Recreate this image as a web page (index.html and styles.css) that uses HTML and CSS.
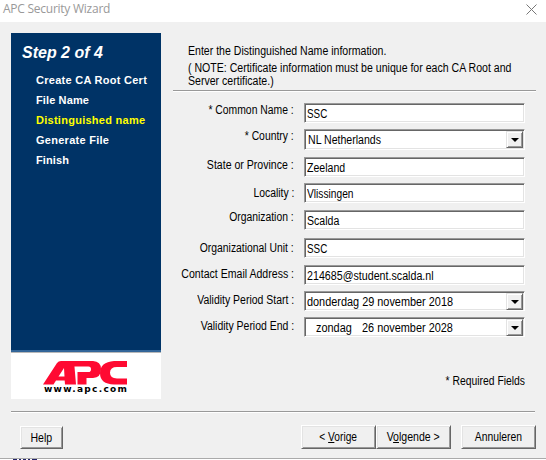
FILE: index.html
```html
<!DOCTYPE html>
<html lang="en">
<head>
<meta charset="utf-8">
<title>APC Security Wizard</title>
<link rel="stylesheet" href="styles.css">
</head>
<body>
<div class="window">
  <header class="titlebar">
    <span class="caption">APC Security Wizard</span>
    <svg class="close" width="11" height="11" viewBox="0 0 11 11"><path d="M.5.5l10 10M10.5.5l-10 10"/></svg>
  </header>
  <main class="content">
    <aside class="side">
      <div class="steps">
        <h1>Step 2 of 4</h1>
        <ol>
          <li>Create CA Root Cert</li>
          <li class="tight">File Name</li>
          <li class="current">Distinguished name</li>
          <li>Generate File</li>
          <li class="tight">Finish</li>
        </ol>
      </div>
      <div class="brand">
        <svg class="logo" width="84" height="24" viewBox="0 0 84 24">
          <path fill-rule="evenodd" d="M0 23.500L14 2Q15.500 0 18 0H31L33 23.500H22L21.700 19.500H13L10.500 23.500ZM15.500 15.500H21.500L21 7Z"/>
          <path fill-rule="evenodd" d="M31 0H50Q58 .5 58 8Q58 16.500 50 17H43.500V23.500H34.500V11H45.500Q48 11 48 8.200Q48 5.500 45.500 5.500H31Z"/>
          <path d="M84 0H71Q57 1 57 12Q57 23 71 23.500H84V17.500H74Q67 17.500 67 11.800Q67 6 74 6H84Z"/>
        </svg>
        <span class="url">www.apc.com</span>
      </div>
    </aside>
    <section class="panel">
      <p class="intro"><span class="t n88">Enter the Distinguished Name information.</span></p>
      <p class="note"><span class="t n88">( NOTE: Certificate information must be unique for each CA Root and</span><br><span class="t n88">Server certificate.)</span></p>
      <hr>
      <form class="form">
        <label class="up3"><span class="t n86">* Common Name :</span></label><div class="field"><span class="t n82">SSC</span></div>
        <label class="up3"><span class="t n86">* Country :</span></label><div class="field combo"><span class="t n88">NL Netherlands</span><i class="drop"></i></div>
        <label class="up2"><span class="t n88">State or Province :</span></label><div class="field"><span class="t n88">Zeeland</span></div>
        <label><span class="t n86">Locality :</span></label><div class="field"><span class="t n85">Vlissingen</span></div>
        <label class="up3"><span class="t n86">Organization :</span></label><div class="field"><span class="t n88">Scalda</span></div>
        <label><span class="t n86">Organizational Unit :</span></label><div class="field"><span class="t n82">SSC</span></div>
        <label class="up1"><span class="t n88">Contact Email Address :</span></label><div class="field"><span class="t n89">214685@student.scalda.nl</span></div>
        <label class="up1"><span class="t n87">Validity Period Start :</span></label><div class="field combo date"><span class="t n91">donderdag 29 november 2018</span><i class="drop"></i></div>
        <label class="up1"><span class="t n87">Validity Period End :</span></label><div class="field combo date"><span class="t n91 day">zondag</span><span class="t n91">26 november 2028</span><i class="drop"></i></div>
      </form>
      <p class="required"><span class="t n86">* Required Fields</span></p>
    </section>
  </main>
  <footer class="actions">
    <button class="help"><span class="t n88">Help</span></button>
    <button class="wide back"><span class="t n85">&lt; <u>V</u>orige</span></button>
    <button class="wide"><span class="t n88">V<u>o</u>lgende &gt;</span></button>
    <button class="wide cancel"><span class="t n86">Annuleren</span></button>
  </footer>
</div>
<svg class="behind" width="40" height="1" viewBox="0 0 40 1"><path d="M13 .5h4M19 .5h2M23 .5h3M28 .5h2M32 .5h5"/></svg>
</body>
</html>
```

FILE: styles.css
```css
* { box-sizing: border-box; }
body { margin: 0; width: 546px; height: 460px; overflow: hidden; background: #fff; font: 12px/14px "Liberation Sans", Arial, sans-serif; color: #000; }
p, h1, ol { margin: 0; padding: 0; }
span { white-space: pre; }
/* Condensed dialog lettering */
.t { display: inline-block; transform-origin: 0 50%; }
label .t, .required .t { transform-origin: 100% 50%; }
button .t { transform-origin: 50% 50%; }
.n82 { transform: scaleX(.82); }
.n85 { transform: scaleX(.85); }
.n86 { transform: scaleX(.864); }
.n87 { transform: scaleX(.872); }
.n88 { transform: scaleX(.88); }
.n89 { transform: scaleX(.89); }
.n91 { transform: scaleX(.908); }
.window { height: 459px; background: #f0f0f0; border-bottom: 1px solid #aaa; }
.titlebar { height: 22px; background: #fff; display: flex; justify-content: space-between; padding: 0 9px 0 3px; }
.caption { font: 12px/18px "Open Sans", "Noto Sans", sans-serif; color: #999; letter-spacing: -.25px; }
.close { margin-top: 4px; stroke: #777; stroke-width: 1; fill: none; }
.content { height: 389px; padding: 11px 11px 0; display: flex; }
.side { width: 150px; height: 366px; background: #fff; flex: none; }
.steps { height: 319px; background: #036; border-bottom: 2px solid #369; box-shadow: 0 1px #b8b8b8; color: #fff; padding: 9px 0 0 11px; font-weight: bold; }
.steps h1 { font: italic bold 16px/21px "Liberation Sans", Arial, sans-serif; }
.steps ol { list-style: none; padding: 7px 0 0 14px; font-size: 11px; line-height: 20px; letter-spacing: .27px; }
.steps .tight { letter-spacing: .12px; }
.steps li { white-space: nowrap; }
.current { color: #ff0; }
.brand { display: flex; flex-direction: column; align-items: flex-start; padding: 9px 0 0 32px; }
.logo { fill: #ff0a32; display: block; }
.url { font: bold 9px/9px "DejaVu Sans", sans-serif; letter-spacing: 1.3px; padding-left: 1px; }
.panel { width: 363px; margin-left: 12px; }
.intro { padding: 11px 0 0 15px; height: 25px; }
.note { padding: 4px 0 0 15px; line-height: 13px; height: 30px; white-space: nowrap; }
.note .t { vertical-align: top; }
hr { margin: 2px 0 0; border: 0; height: 2px; background: #fff; border-top: 1px solid #999; }
.form { display: grid; grid-template-columns: 121px 221px; column-gap: 10px; grid-template-rows: 26px 28px 26px 27px 28px 27px 26px 26px 21px; margin-top: 11px; }
.form label { display: flex; justify-content: flex-end; padding-top: 3px; white-space: nowrap; }
.form .up1 { padding-top: 2px; }
.form .up2 { padding-top: 1px; }
.form .up3 { padding-top: 0; }
.field { height: 20px; background: #fff; border: 1px solid; border-color: #999 #fff #fff #999; box-shadow: inset 1px 1px #666, inset -1px -1px #e3e3e3; padding: 3px 0 0 2px; display: flex; }
.combo { height: 21px; padding-left: 3px; }
.date { height: 20px; padding-left: 2px; }
.day { margin-left: 9px; width: 46px; }
.drop { width: 17px; height: 17px; margin: -2px 1px 0 auto; background: #f0f0f0; border: 1px solid; border-color: #e3e3e3 #666 #666 #e3e3e3; box-shadow: inset 1px 1px #fff, inset -1px -1px #999; display: flex; align-items: center; justify-content: center; }
.drop::after { content: ""; border: 4px solid transparent; border-top-color: #000; border-bottom: 0; }
.required { text-align: right; padding: 36px 11px 0 0; }
.actions { margin: 0 11px; border-top: 1px solid #999; box-shadow: inset 0 1px #fff; display: flex; padding: 13px 0 0; }
button { height: 24px; padding: 0; background: #f0f0f0; font: inherit; color: #000; border: 1px solid; border-color: #fff #666 #666 #fff; box-shadow: inset 1px 1px #e3e3e3, inset -1px -1px #999; }
.help { width: 43px; height: 23px; margin: 1px 0 0 9px; }
.wide { width: 75px; }
.back { margin-left: 238px; }
.cancel { margin-left: 10px; margin-right: -1px; }
u { text-underline-offset: 1px; }
.behind { display: block; stroke: #226; stroke-width: 1; }
```
